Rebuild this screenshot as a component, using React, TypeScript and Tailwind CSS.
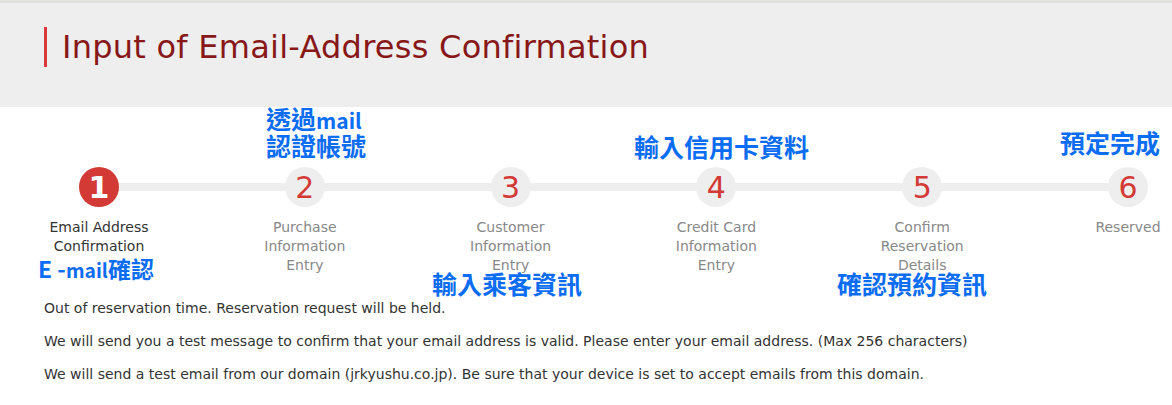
const steps = [
  { num: "1", label: "Email Address Confirmation", active: true },
  { num: "2", label: "Purchase Information Entry" },
  { num: "3", label: "Customer Information Entry" },
  { num: "4", label: "Credit Card Information Entry" },
  { num: "5", label: "Confirm Reservation Details" },
  { num: "6", label: "Reserved" },
];

const notes = [
  { cjk: "透過", latin: "mail", rest: "\n認證帳號", cls: "left-[266px] top-[106px] text-[25px]" },
  { cjk: "輸入信用卡資料", cls: "left-[634px] top-[134px] text-[25px]" },
  { cjk: "預定完成", cls: "left-[1060px] top-[130px] text-[25px]" },
  { pre: "E -", latin: "mail", rest: "確認", cls: "left-[38px] top-[256px] text-[23px]" },
  { cjk: "輸入乘客資訊", cls: "left-[432px] top-[271px] text-[25px]" },
  { cjk: "確認預約資訊", cls: "left-[837px] top-[271px] text-[25px]" },
];

const App = () => {
  return (
    <div
      className="relative w-[1172px] h-[405px] overflow-hidden bg-white"
      style={{ fontFamily: '"DejaVu Sans", Verdana, sans-serif' }}
    >
      <div className="border-t-[3px] border-[#e2e2dc] bg-[#eeeeee] h-[107px] pt-[24px] pl-[44px]">
        <div className="flex items-center border-l-[3px] border-[#d8393a] pl-[15px] h-[40px]">
          <h1 className="text-[32px] leading-none text-[#881818] tracking-[0.25px]">
            Input of Email-Address Confirmation
          </h1>
        </div>
      </div>

      <div className="relative mt-[60px] ml-[79px] w-[1069px]">
        <div className="absolute left-[20px] right-[20px] top-[16px] h-[8px] bg-[#eeeeee]" />
        <div className="relative flex justify-between">
          {steps.map((s) => (
            <div key={s.num} className="flex w-10 flex-col items-center">
              <div
                className={
                  s.active
                    ? "flex h-10 w-10 items-center justify-center rounded-full bg-[#d33a36] text-[30px] font-bold text-white"
                    : "flex h-10 w-10 items-center justify-center rounded-full bg-[#eeeeee] text-[30px] text-[#d33a36]"
                }
              >
                {s.num}
              </div>
              <p
                className={
                  "mt-[11px] w-[106px] shrink-0 text-center text-[14px] leading-[19px] " +
                  (s.active ? "text-[#333333]" : "text-[#888888]")
                }
              >
                {s.label}
              </p>
            </div>
          ))}
        </div>
      </div>

      <div className="absolute left-[44px] top-[298px] text-[14px] leading-[20px] text-[#333333]">
        <p>Out of reservation time. Reservation request will be held.</p>
        <p className="mt-[13px]">
          We will send you a test message to confirm that your email address is valid. Please enter your email address. (Max 256 characters)
        </p>
        <p className="mt-[13px]">
          We will send a test email from our domain (jrkyushu.co.jp). Be sure that your device is set to accept emails from this domain.
        </p>
      </div>

      {notes.map((n, i) => (
        <div
          key={i}
          className={
            "absolute whitespace-pre font-bold leading-[25px] text-[#0b6cf4] " + n.cls
          }
          style={{ fontFamily: '"Noto Sans CJK TC", "Noto Sans", sans-serif' }}
        >
          {n.pre && <span className="font-semibold">{n.pre}</span>}
          {n.cjk}
          {n.latin && <span className="text-[0.84em] font-semibold">{n.latin}</span>}
          {n.rest}
        </div>
      ))}
    </div>
  );
};

export default App;
